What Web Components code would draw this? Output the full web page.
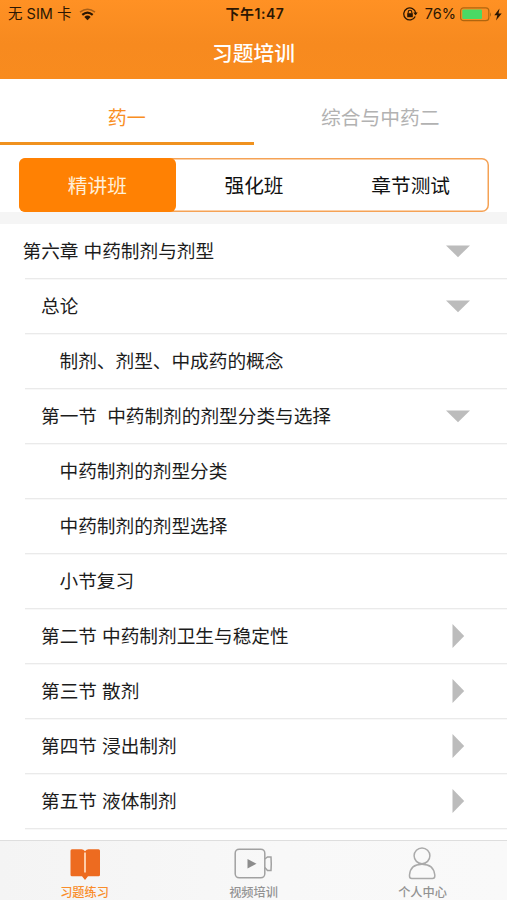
<!DOCTYPE html>
<html lang="zh-CN">
<head>
<meta charset="utf-8">
<title>习题培训</title>
<style>
html,body{margin:0;height:100%}
body{width:507px;height:900px;overflow:hidden;background:#fff;font-family:"Noto Sans CJK SC",sans-serif;color:#1c1c1c}
</style>
</head>
<body>
<training-app></training-app>
<script>
const define = (name, html, setup) => customElements.define(name, class extends HTMLElement {
  constructor() {
    super();
    const t = document.createElement('template');
    t.innerHTML = html;
    this.attachShadow({mode: 'open'}).append(t.content.cloneNode(true));
  }
  connectedCallback() { if (setup) setup(this, this.shadowRoot); }
});

define('status-bar', `
<style>
:host{display:grid;grid-template-columns:1fr auto 1fr;align-items:center;height:28px;padding:0 5px 0 8px;box-sizing:border-box;color:#2b1703;font:14.5px/28px Inter,"Noto Sans CJK SC",sans-serif}
.side{display:flex;align-items:center}
.right{justify-content:flex-end}
.time{font-weight:600;font-size:14px;letter-spacing:.5px}
svg{display:block;flex:none}
</style>
<div class="side"><span>无 SIM 卡</span>
<svg style="margin-left:8px" width="17" height="13" viewBox="0 0 17 13" fill="none" stroke="currentColor"><path d="M1 4.2Q8.500-1.600 16 4.200" stroke-width="1.500" opacity=".4"/><path d="M3.300 6.800Q8.500 2.400 13.700 6.800" stroke-width="2.200"/><path d="M5.300 9Q8.500 6.200 11.700 9L8.500 12.300Z" fill="currentColor" stroke="none"/></svg></div>
<span class="time">下午1:47</span>
<div class="side right">
<svg width="15" height="14" viewBox="0 0 15 14" fill="none" stroke="currentColor"><path d="M12.200 9.500A6 6 0 1 1 12.700 6" stroke-width="1.300"/><path d="M10.300 5.600h4.400l-2.200 2.900z" fill="currentColor" stroke="none"/><rect x="4.200" y="6.200" width="5.600" height="4" fill="currentColor" stroke="none"/><path d="M5.200 6.500V5a1.800 1.800 0 0 1 3.600 0v1.500" stroke-width="1.100"/></svg>
<span style="margin:0 4px 0 7px;font-size:14.500px">76%</span>
<svg width="33" height="15" viewBox="0 0 33 15"><rect x=".6" y=".8" width="28.200" height="12.900" rx="3" fill="none" stroke="#b0650f" stroke-width="1.200"/><rect x="2.300" y="2.500" width="19.700" height="9.500" rx="1" fill="#4bd964"/><path d="M30 5.200q2 2.300 0 4.600z" fill="#a9610e"/></svg>
<svg style="margin-left:1px" width="8" height="13" viewBox="0 0 8 13"><path d="M5.500.5L.3 7.300h3L2 12.500 7.700 5.400H4.500z" fill="currentColor"/></svg>
</div>`);

define('nav-header', `
<style>
:host{display:flex;flex-direction:column;height:79px;background:linear-gradient(#ff9124,#f78a1f 55%,#f88b1e)}
h1{margin:0;flex:1;display:flex;align-items:center;justify-content:center;color:#fff;font-weight:500;font-size:20.700px;line-height:30px;padding-bottom:4px}
</style>
<status-bar></status-bar><h1><slot></slot></h1>`);

define('subject-tab', `
<style>
:host{flex:1;display:flex;align-items:center;justify-content:center;box-sizing:border-box;border-bottom:3px solid transparent;color:#b2b2b2;font-size:19.800px;line-height:30px;padding-top:14px;padding-bottom:1px}
:host([active]){color:#f98e22;border-color:#f0921f;font-size:19px}
</style><slot></slot>`);
define('subject-tabs', `<style>:host{display:flex;height:66px}</style><slot></slot>`);

define('class-option', `
<style>
:host{flex:1;display:flex;align-items:center;justify-content:center;font-size:19.700px;line-height:30px;border-radius:6px;font-weight:400;color:#111;padding-bottom:1px}
:host([active]){background:#ff8103;color:#ffefd9}
</style><slot></slot>`);
define('class-switch', `
<style>
:host{display:block;padding:13px 18px 0 19px;height:79px;box-sizing:border-box;background:linear-gradient(#fff 67px,#f5f5f5 67px)}
.box{display:flex;height:54px;box-sizing:border-box;border-radius:7px;background:#fff;box-shadow:inset 0 0 0 1.500px #f5a255}
</style><div class="box"><slot></slot></div>`);

define('chapter-row', `
<style>
:host{display:block;height:55px;padding-left:25px;box-sizing:border-box}
.line{height:55px;box-sizing:border-box;border-bottom:1px solid #eaeaea;box-shadow:0 1px #f8f8f8;display:flex;align-items:center;justify-content:space-between;padding-right:36px}
.t{white-space:pre;font-size:18.670px;line-height:30px;margin-left:-2.500px;word-spacing:.9px;padding-bottom:2px}
:host([level="1"]) .t{margin-left:16px}
:host([level="2"]) .t{margin-left:34.500px}
svg{display:none}
:host([state]) svg{display:block}
:host([state="closed"]) svg{transform:rotate(-90deg)}
</style>
<div class="line"><span class="t"><slot></slot></span><svg width="26" height="26" viewBox="0 0 26 26"><path d="M1 7.500H25L13 19.200Z" fill="#bcbcbc"/></svg></div>`);

define('chapter-list', `<style>:host{display:block;flex:1;min-height:0;overflow:hidden}</style><slot></slot>`);

const icons = {
  book: '<path d="M4 2.200H13.500Q15.500 2.200 17 4.200Q18.500 2.200 20.500 2.200H30.500Q32 2.200 32 3.700V27.800Q32 29.300 30.500 29.300H20L17 33L14 29.300H4Q2.500 29.300 2.500 27.800V3.700Q2.500 2.200 4 2.200Z" fill="#ed6b20"/><path d="M17 5.500V25.500" stroke="#ffd2b0" stroke-width="1.900"/>',
  video: '<g fill="none" stroke="#a1a1a1" stroke-width="1.500"><rect x="-1.800" y="2.200" width="29.600" height="28.600" rx="4"/><path d="M27.800 12L30.500 10H34Q34.500 16.700 34 23.400H30.500L27.800 20.500"/></g><path d="M10.500 12V21.500L19.500 16.700Z" fill="#8c8c8c"/>',
  person: '<g fill="#f9f9f9" stroke="#aaa" stroke-width="1.500"><circle cx="16" cy="8.800" r="7.900"/><path d="M3.500 29V28Q4.300 17.200 16 17.200T28.800 28V29Q28.800 31.500 26.500 31.500H5.800Q3.500 31.500 3.500 29Z"/></g>'
};
define('bar-item', `
<style>
:host{flex:1;display:flex;flex-direction:column;align-items:center;color:#929292;font-size:12.200px;line-height:17px;font-weight:500;padding-top:6px}
:host([active]){color:#f98d2b}
svg{display:block;overflow:visible;margin-bottom:2px}
</style><svg width="33" height="35" viewBox="0 0 33 35"></svg><span><slot></slot></span>`,
(el, root) => { root.querySelector('svg').innerHTML = icons[el.getAttribute('icon')]; });
define('bottom-bar', `
<style>:host{display:flex;height:60.500px;box-sizing:border-box;border-top:1px solid #dedede;background:linear-gradient(90deg,#f4f4f4,#f8f8f8 55%,#f9f9f9)}</style><slot></slot>`);

define('training-app', `
<style>:host{display:flex;flex-direction:column;width:507px;height:900px;overflow:hidden;background:#fff}</style>
<nav-header>习题培训</nav-header>
<subject-tabs><subject-tab active>药一</subject-tab><subject-tab>综合与中药二</subject-tab></subject-tabs>
<class-switch><class-option active>精讲班</class-option><class-option>强化班</class-option><class-option>章节测试</class-option></class-switch>
<chapter-list></chapter-list>
<bottom-bar><bar-item icon="book" active>习题练习</bar-item><bar-item icon="video">视频培训</bar-item><bar-item icon="person">个人中心</bar-item></bottom-bar>`,
(el, root) => {
  const list = root.querySelector('chapter-list');
  [[0,'open','第六章 中药制剂与剂型'],[1,'open','总论'],[2,'','制剂、剂型、中成药的概念'],[1,'open','第一节  中药制剂的剂型分类与选择'],
   [2,'','中药制剂的剂型分类'],[2,'','中药制剂的剂型选择'],[2,'','小节复习'],[1,'closed','第二节 中药制剂卫生与稳定性'],
   [1,'closed','第三节 散剂'],[1,'closed','第四节 浸出制剂'],[1,'closed','第五节 液体制剂']].forEach(([level, state, text]) => {
    const row = document.createElement('chapter-row');
    row.setAttribute('level', level);
    if (state) row.setAttribute('state', state);
    row.textContent = text;
    list.append(row);
  });
});
</script>
</body>
</html>
